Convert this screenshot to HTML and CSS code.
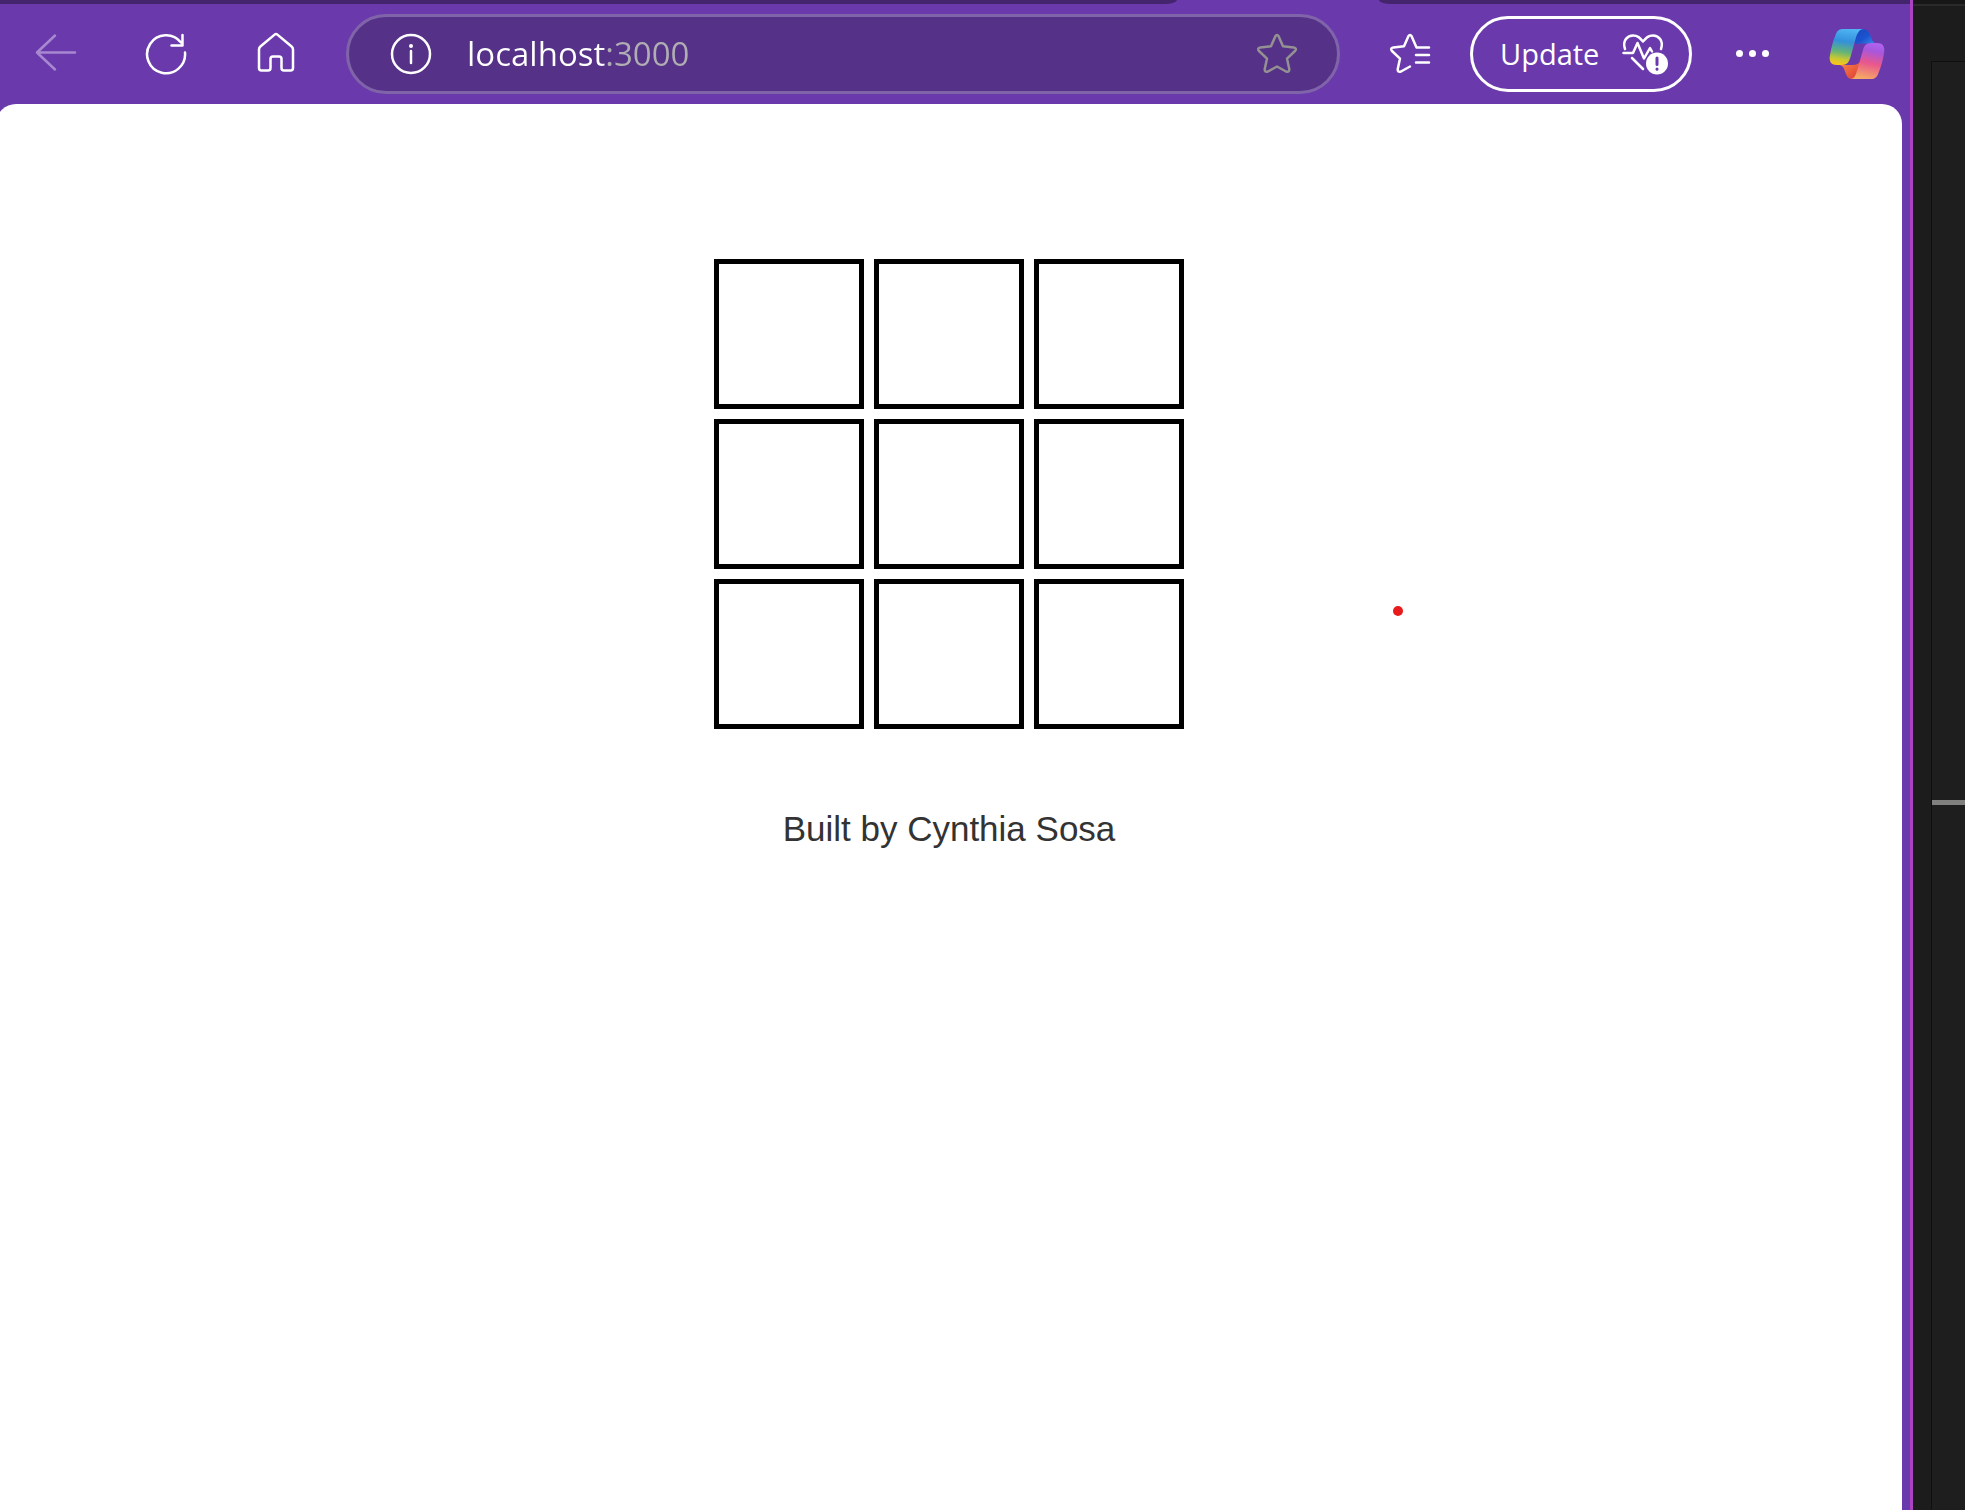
FILE: index.html
```html
<!DOCTYPE html>
<html lang="en">
<head>
<meta charset="utf-8">
<title>Tic Tac Toe</title>
<link rel="stylesheet" href="styles.css">
</head>
<body>
<div class="desktop">
  <div class="browser">
    <div class="tabs">
      <div class="tabs-before"></div>
      <div class="tabs-active"></div>
      <div class="tabs-after"></div>
    </div>
    <header class="toolbar">
      <nav class="nav">
        <button class="tool tool-disabled" type="button" aria-label="Back">
          <svg width="44" height="44" viewBox="0 0 44 44"><path d="M41 20.500H3M21 3.500L3 20.500L21 37.500"/></svg>
        </button>
        <button class="tool" type="button" aria-label="Refresh">
          <svg width="44" height="44" viewBox="0 0 44 44"><path d="M41 20.500A19 19 0 1 1 37 10.500M38.500 3V13.500H27.500"/></svg>
        </button>
        <button class="tool" type="button" aria-label="Home">
          <svg width="44" height="44" viewBox="0 0 44 44"><path d="M20.600 2.600Q22 1.400 23.400 2.600L37.600 14.500Q39 15.700 39 17.500V36Q39 38.500 36.500 38.500H30Q27.500 38.500 27.500 36V27Q27.500 24.500 25 24.500H19Q16.500 24.500 16.500 27V36Q16.500 38.500 14 38.500H7.500Q5 38.500 5 36V17.500Q5 15.700 6.400 14.500Z"/></svg>
        </button>
      </nav>
      <div class="address">
        <button class="address-button" type="button" aria-label="Site information">
          <svg width="44" height="44" viewBox="0 0 44 44"><circle cx="22" cy="22" r="19"/><path d="M22 19V31"/><circle class="solid" cx="22" cy="14" r="2"/></svg>
        </button>
        <input class="address-input" type="text" value="localhost:3000" aria-label="Address">
        <button class="address-button address-star" type="button" aria-label="Add to favorites">
          <svg width="44" height="44" viewBox="0 0 44 44"><path d="M20.400 4.200Q22 1.600 23.600 4.200L28 14.200L38.600 15.400Q42.200 16.200 40 19L32 26.600L34.300 37.200Q34.500 40.800 31 39.500L22 34.500L13 39.500Q9.500 40.800 9.700 37.200L12 26.600L4 19Q1.800 16.200 5.400 15.400L16 14.200Z"/></svg>
        </button>
      </div>
      <div class="actions">
        <button class="tool" type="button" aria-label="Favorites">
          <svg width="44" height="44" viewBox="0 0 44 44"><path d="M41 15.500H28.500L23.600 4.200Q22 1.600 20.400 4.200L16 14.200L5.400 15.400Q1.800 16.200 4 19L12 26.600L9.700 37.200Q9.500 40.800 13 39.500L22 34.500M28 23H41M28 30.500H41"/></svg>
        </button>
        <button class="update" type="button">
          <span>Update</span>
          <svg width="48" height="44" viewBox="0 0 48 44"><path d="M4 18C1 9 7 4.500 12 4.500C17 4.500 19 7 22 10.500C25 7 27 4.500 32 4.500C37 4.500 43 9 40 18M2.500 22H12L16.500 12L23 27.500L29 17L31 20.500M11 27L22 38"/><circle class="solid" cx="36" cy="32.500" r="11"/><path class="mark" d="M36 27V33.500M36 38V38.200"/></svg>
        </button>
        <button class="tool" type="button" aria-label="Settings and more">
          <svg width="44" height="44" viewBox="0 0 44 44"><g class="solid"><circle cx="9.500" cy="21.500" r="3.500"/><circle cx="22.500" cy="21.500" r="3.500"/><circle cx="35.500" cy="21.500" r="3.500"/></g></svg>
        </button>
        <button class="tool tool-copilot" type="button" aria-label="Copilot">
          <svg class="copilot" width="56" height="52" viewBox="0 0 56 52">
            <defs>
              <linearGradient id="cool" x1=".55" y1="0" x2=".4" y2="1"><stop offset="0" stop-color="#50b4f4"/><stop offset=".35" stop-color="#3290dc"/><stop offset=".65" stop-color="#65b477"/><stop offset=".85" stop-color="#c8c832"/><stop offset="1" stop-color="#f8c41c"/></linearGradient>
              <linearGradient id="warm" x1=".6" y1="0" x2=".4" y2="1"><stop offset="0" stop-color="#ae62ee"/><stop offset=".2" stop-color="#a857dc"/><stop offset=".55" stop-color="#e9578d"/><stop offset="1" stop-color="#f6ab62"/></linearGradient>
              <linearGradient id="blue" x1="0" y1="0" x2="1" y2="1"><stop offset="0" stop-color="#1a45bd"/><stop offset=".5" stop-color="#1b54cf"/><stop offset="1" stop-color="#3f97ee"/></linearGradient>
              <linearGradient id="orange" x1="0" y1="0" x2="1" y2="1"><stop offset="0" stop-color="#f68a4c"/><stop offset=".6" stop-color="#eb5a3b"/><stop offset="1" stop-color="#cf3d3c"/></linearGradient>
            </defs>
            <path fill="url(#blue)" d="M27 1H34C39 1 40.500 5 42 9C43.500 13 44 15 48 15.500H36C31 15.500 28 15 26 17Z"/>
            <path fill="url(#orange)" d="M29 51H23C18 51 17 46 15.500 42C14.500 39 13 37 9 37H21C26 37 28 37 31 34Z"/>
            <path fill="url(#cool)" d="M14 1H35C30 1 28 6 26.500 11L21.500 29C20 34 18 37 13 37H8C1 37 0 32 1 27C2.500 19 4 13 6.500 7C8 3 10 1 14 1Z"/>
            <path fill="url(#warm)" d="M42 51H21C26 51 27 46 28.500 41L34 22C35 18 37 15 42 15H48C55 15 56 20 55 25C54 32 52 39 49.500 45C48 49 46 51 42 51Z"/>
          </svg>
        </button>
      </div>
    </header>
    <main class="page">
      <div class="board">
        <button class="cell" type="button" aria-label="Square 1"></button>
        <button class="cell" type="button" aria-label="Square 2"></button>
        <button class="cell" type="button" aria-label="Square 3"></button>
        <button class="cell" type="button" aria-label="Square 4"></button>
        <button class="cell" type="button" aria-label="Square 5"></button>
        <button class="cell" type="button" aria-label="Square 6"></button>
        <button class="cell" type="button" aria-label="Square 7"></button>
        <button class="cell" type="button" aria-label="Square 8"></button>
        <button class="cell" type="button" aria-label="Square 9"></button>
      </div>
      <p class="credit">Built by Cynthia Sosa</p>
    </main>
  </div>
  <aside class="editor">
    <div class="editor-panel"><div class="editor-bar"></div></div>
  </aside>
  <div class="pointer"></div>
</div>
</body>
</html>
```
FILE: styles.css
```css
* {
  box-sizing: border-box;
}

body {
  margin: 0;
  font-family: "Liberation Sans", Arial, sans-serif;
}

button {
  padding: 0;
  border: 0;
  background: none;
  color: inherit;
  font: inherit;
}

svg {
  display: block;
  fill: none;
  stroke: currentColor;
  stroke-width: 2.5;
  stroke-linecap: round;
  stroke-linejoin: round;
}

.solid {
  fill: currentColor;
  stroke: none;
}

.desktop {
  position: relative;
  display: flex;
  min-height: 100vh;
  overflow: hidden;
  background: #1c1c1c;
}

.browser {
  display: flex;
  flex: 1;
  flex-direction: column;
  min-width: 0;
  border-right: 3px solid #ab42c1;
  background: #6a3aad;
}

/* Bottom edge of the tab strip */
.tabs {
  display: flex;
  height: 4px;
}

.tabs-before,
.tabs-after {
  background: #44256d;
}

.tabs-before {
  flex: 1;
  border-radius: 0 0 12px 0 / 0 0 4px 0;
}

.tabs-active {
  width: 202px;
}

.tabs-after {
  width: 531px;
  border-radius: 0 0 0 12px / 0 0 0 4px;
}

.toolbar {
  display: flex;
  align-items: center;
  gap: 30px;
  height: 100px;
  padding: 0 8px 0 16px;
  color: #fff;
  font-family: "Open Sans", "Noto Sans", sans-serif;
}

.nav {
  display: flex;
  gap: 30px;
}

.actions {
  display: flex;
  align-items: center;
  gap: 20px;
}

.tool {
  display: grid;
  place-items: center;
  width: 80px;
  height: 76px;
}

.tool-disabled {
  color: #a788d1;
}

.tool-copilot {
  width: 90px;
}

.copilot {
  stroke: none;
}

.address {
  display: flex;
  flex: 1;
  align-items: center;
  min-width: 0;
  height: 80px;
  padding: 0 38px 0 40px;
  border: 3px solid #8064aa;
  border-radius: 40px;
  background: #553188;
}

.address-star {
  color: #939191;
}

.address-input {
  flex: 1;
  min-width: 0;
  height: 60px;
  margin: 0 30px 0 34px;
  padding: 0;
  border: 0;
  outline: 0;
  background: linear-gradient(90deg, #fff 138px, #b0aeb2 138px) text;
  color: transparent;
  font: 33px/60px "Open Sans", "Noto Sans", sans-serif;
}

.update {
  display: flex;
  align-items: center;
  justify-content: space-between;
  width: 222px;
  height: 76px;
  padding: 0 20px 2px 27px;
  border: 3px solid #fff;
  border-radius: 38px;
  font-size: 29px;
}

.mark {
  stroke: #6a3aad;
  stroke-width: 3;
}

.page {
  flex: 1;
  margin: 0 8px 0 -4px;
  padding: 155px 20px 80px;
  border-radius: 20px 20px 0 0;
  background: #fff;
}

.board {
  display: grid;
  grid-template-columns: repeat(3, 150px);
  gap: 10px;
  justify-content: center;
}

.cell {
  height: 150px;
  border: 5px solid #000;
  background: #fff;
}

.credit {
  margin: 80px 0 0;
  color: #333;
  font-size: 35px;
  line-height: 40px;
  text-align: center;
}

/* Dark editor window behind the browser */
.editor {
  display: flex;
  flex-direction: column;
  width: 52px;
  padding: 61px 0 0 18px;
  background: linear-gradient(#171717 4px, #2a2a2a 4px, #2a2a2a 6px, #1c1c1c 6px);
}

.editor-panel {
  flex: 1;
  padding-top: 738px;
  border: solid #0f0f0f;
  border-width: 1px 0 0 1px;
  background: #1e1e1e;
}

.editor-bar {
  height: 5px;
  background: #80807f;
}

.pointer {
  position: absolute;
  top: 606px;
  left: 1393px;
  width: 10px;
  height: 10px;
  border-radius: 50%;
  background: #e81a1c;
}
```
